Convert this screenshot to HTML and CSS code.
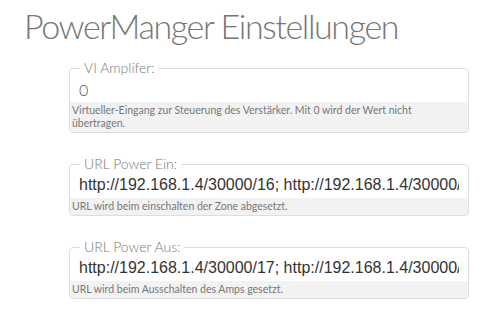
FILE: index.html
```html
<!DOCTYPE html>
<html lang="de">
<head>
    <meta charset="UTF-8">
    <meta name="viewport" content="width=device-width, initial-scale=1.0">
    <title>PowerManger Einstellungen</title>
    <link rel="stylesheet" href="styles.css">
</head>
<body>
    <h1 class="title">PowerManger Einstellungen</h1>

    <div class="settings">
        <fieldset class="field">
            <legend class="field-label">VI Amplifer:</legend>
            <input type="text" class="field-input field-number" value="0">
            <div class="field-help">Virtueller-Eingang zur Steuerung des Verstärker. Mit 0 wird der Wert nicht übertragen.</div>
        </fieldset>

        <fieldset class="field">
            <legend class="field-label">URL Power Ein:</legend>
            <input type="text" class="field-input field-url" value="http://192.168.1.4/30000/16; http://192.168.1.4/30000/15">
            <div class="field-help">URL wird beim einschalten der Zone abgesetzt.</div>
        </fieldset>

        <fieldset class="field">
            <legend class="field-label">URL Power Aus:</legend>
            <input type="text" class="field-input field-url" value="http://192.168.1.4/30000/17; http://192.168.1.4/30000/18">
            <div class="field-help">URL wird beim Ausschalten des Amps gesetzt.</div>
        </fieldset>
    </div>
</body>
</html>
```

FILE: styles.css
```css
* {
    margin: 0;
    padding: 0;
    box-sizing: border-box;
}

body {
    background-color: #fff;
    color: #555;
    font-family: Lato, "Open Sans", sans-serif;
    padding: 6px 0 0 24px;
}

.title {
    font-size: 34px;
    font-weight: 300;
    color: #767676;
    line-height: 40px;
    letter-spacing: -1.4px;
}

.settings {
    display: flex;
    flex-direction: column;
    gap: 23px;
    width: 400px;
    margin: 14px 0 0 45px;
}

.field {
    border: 1px solid #ddd;
    border-radius: 4px;
    overflow: hidden;
}

.field-label {
    font-size: 14px;
    font-weight: 300;
    line-height: 16px;
    color: #777;
    margin-left: 10px;
    padding: 0 4px;
}

.field-input {
    display: block;
    width: 100%;
    height: 26px;
    border: none;
    outline: none;
    padding: 0 9px;
    background: transparent;
}

.field-number {
    font-family: Lato, sans-serif;
    font-size: 16px;
    font-weight: 300;
    color: #555;
}

.field-url {
    font-family: "Liberation Sans", Arial, sans-serif;
    font-size: 16px;
    color: #333;
}

.field-help {
    background-color: #f2f2f2;
    font-size: 10.5px;
    line-height: 13px;
    color: #777;
    padding: 2px 2px;
}
```
